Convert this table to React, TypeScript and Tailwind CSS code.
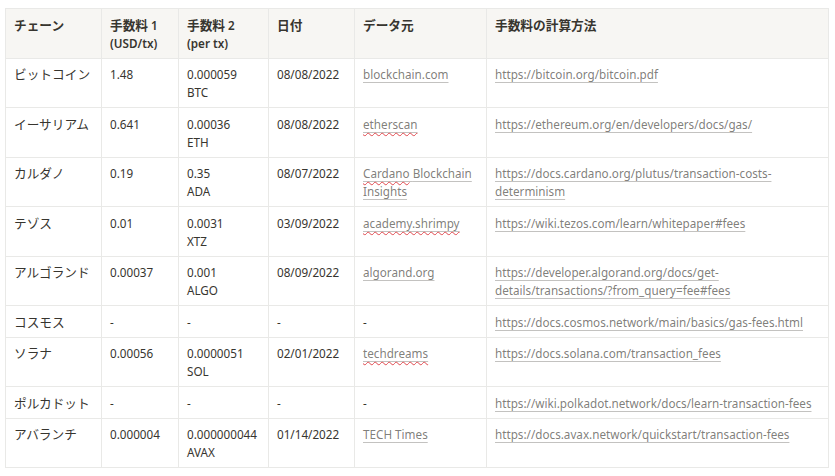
import React from "react"

type Src = { text: string; typo?: string[] } | null

const rows: {
  chain: string
  fee1: string
  fee2: [string, string] | null
  date: string
  source: Src
  url: string
}[] = [
  { chain: "ビットコイン", fee1: "1.48", fee2: ["0.000059", "BTC"], date: "08/08/2022", source: { text: "blockchain.com" }, url: "https://bitcoin.org/bitcoin.pdf" },
  { chain: "イーサリアム", fee1: "0.641", fee2: ["0.00036", "ETH"], date: "08/08/2022", source: { text: "etherscan", typo: ["etherscan"] }, url: "https://ethereum.org/en/developers/docs/gas/" },
  { chain: "カルダノ", fee1: "0.19", fee2: ["0.35", "ADA"], date: "08/07/2022", source: { text: "Cardano Blockchain Insights", typo: ["Cardano"] }, url: "https://docs.cardano.org/plutus/transaction-costs-determinism" },
  { chain: "テゾス", fee1: "0.01", fee2: ["0.0031", "XTZ"], date: "03/09/2022", source: { text: "academy.shrimpy", typo: ["academy.shrimpy"] }, url: "https://wiki.tezos.com/learn/whitepaper#fees" },
  { chain: "アルゴランド", fee1: "0.00037", fee2: ["0.001", "ALGO"], date: "08/09/2022", source: { text: "algorand.org" }, url: "https://developer.algorand.org/docs/get-details/transactions/?from_query=fee#fees" },
  { chain: "コスモス", fee1: "-", fee2: null, date: "-", source: null, url: "https://docs.cosmos.network/main/basics/gas-fees.html" },
  { chain: "ソラナ", fee1: "0.00056", fee2: ["0.0000051", "SOL"], date: "02/01/2022", source: { text: "techdreams", typo: ["techdreams"] }, url: "https://docs.solana.com/transaction_fees" },
  { chain: "ポルカドット", fee1: "-", fee2: null, date: "-", source: null, url: "https://wiki.polkadot.network/docs/learn-transaction-fees" },
  { chain: "アバランチ", fee1: "0.000004", fee2: ["0.000000044", "AVAX"], date: "01/14/2022", source: { text: "TECH Times" }, url: "https://docs.avax.network/quickstart/transaction-fees" },
]

const cell = "border border-[#e9e9e7] px-2 pt-[6.5px] pb-[6px] align-top"
const th = cell + " font-semibold"
const jp = "text-[12.7px]"
const link = "text-[rgba(55,53,47,0.65)] underline decoration-[rgba(55,53,47,0.3)] underline-offset-[3px]"

function Source({ src }: { src: Src }) {
  if (!src) return <span>-</span>
  const words = src.text.split(" ")
  return (
    <span className={link}>
      {words.map((w, i) => (
        <React.Fragment key={i}>
          {src.typo?.includes(w) ? (
            <span className="underline decoration-wavy decoration-[#e0484d] underline-offset-[3px] decoration-1">{w}</span>
          ) : (
            w
          )}
          {i < words.length - 1 ? " " : ""}
        </React.Fragment>
      ))}
    </span>
  )
}

export default function App() {
  return (
    <div
      className="bg-white w-[835px] h-[476px] pl-[5px] pt-[8px] text-[#37352f] text-[11.7px] leading-[18px]"
      style={{ fontFamily: '"Noto Sans", "Noto Sans CJK JP", sans-serif' }}
    >
      <table className="border-collapse table-fixed w-[823px]">
        <colgroup>
          <col className="w-[96px]" />
          <col className="w-[77px]" />
          <col className="w-[90px]" />
          <col className="w-[86px]" />
          <col className="w-[132px]" />
          <col className="w-[342px]" />
        </colgroup>
        <thead>
          <tr className="bg-[#f7f6f3] text-left">
            <th className={th}>
              <span className={jp}>チェーン</span>
            </th>
            <th className={th}>
              <span className={jp}>手数料</span> 1<br />(USD/tx)
            </th>
            <th className={th}>
              <span className={jp}>手数料</span> 2<br />(per tx)
            </th>
            <th className={th}>
              <span className={jp}>日付</span>
            </th>
            <th className={th}>
              <span className={jp}>データ元</span>
            </th>
            <th className={th}>
              <span className={jp}>手数料の計算方法</span>
              <br />
              &nbsp;
            </th>
          </tr>
        </thead>
        <tbody>
          {rows.map((r) => {
            const tall = r.fee2 !== null
            return (
              <tr key={r.chain}>
                <td className={cell}>
                  <span className={jp}>{r.chain}</span>
                </td>
                <td className={cell}>{r.fee1}</td>
                <td className={cell}>
                  {r.fee2 ? (
                    <>
                      {r.fee2[0]}
                      <br />
                      {r.fee2[1]}
                    </>
                  ) : (
                    "-"
                  )}
                </td>
                <td className={cell}>{r.date}</td>
                <td className={cell}>
                  <Source src={r.source} />
                </td>
                <td className={cell + (tall ? " h-[49.5px]" : "")}>
                  <span className={link}>{r.url}</span>
                </td>
              </tr>
            )
          })}
        </tbody>
      </table>
    </div>
  )
}
